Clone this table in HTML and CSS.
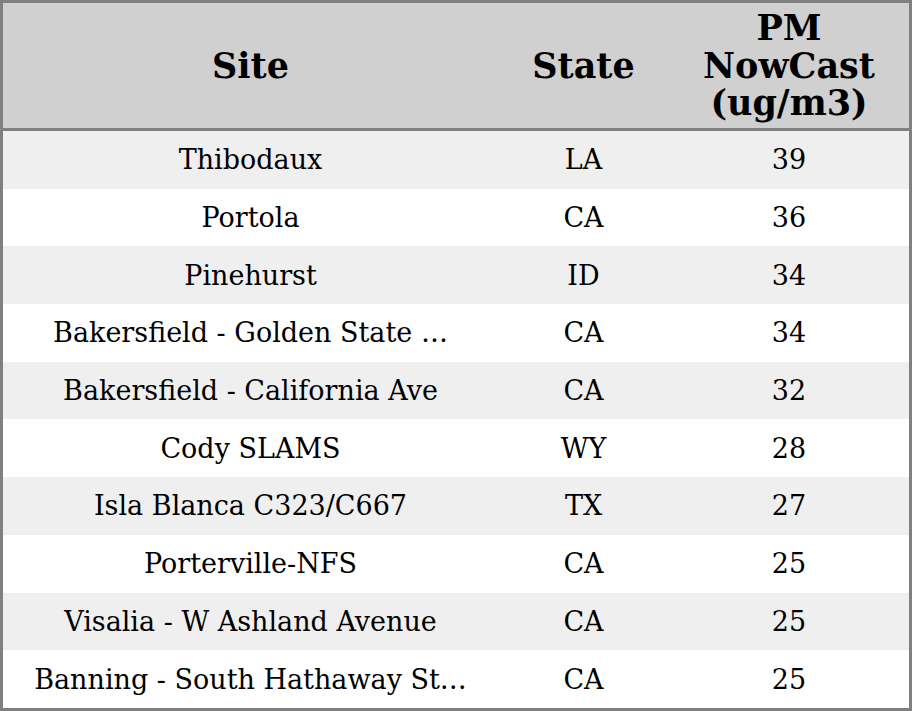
FILE: index.html
```html
<!DOCTYPE html>
<html>
<head>
<meta charset="utf-8">
<link rel="stylesheet" href="styles.css">
</head>
<body>
<table class="grid">
  <colgroup>
    <col class="c-site">
    <col class="c-state">
    <col class="c-pm">
  </colgroup>
  <thead>
    <tr><th>Site</th><th>State</th><th>PM NowCast (ug/m3)</th></tr>
  </thead>
  <tbody>
    <tr><td>Thibodaux</td><td>LA</td><td>39</td></tr>
    <tr><td>Portola</td><td>CA</td><td>36</td></tr>
    <tr><td>Pinehurst</td><td>ID</td><td>34</td></tr>
    <tr><td>Bakersfield - Golden State …</td><td>CA</td><td>34</td></tr>
    <tr><td>Bakersfield - California Ave</td><td>CA</td><td>32</td></tr>
    <tr><td>Cody SLAMS</td><td>WY</td><td>28</td></tr>
    <tr><td>Isla Blanca C323/C667</td><td>TX</td><td>27</td></tr>
    <tr><td>Porterville-NFS</td><td>CA</td><td>25</td></tr>
    <tr><td>Visalia - W Ashland Avenue</td><td>CA</td><td>25</td></tr>
    <tr><td>Banning - South Hathaway St…</td><td>CA</td><td>25</td></tr>
  </tbody>
</table>
</body>
</html>
```
FILE: styles.css
```css
html, body {
  margin: 0;
  padding: 0;
  background: #ffffff;
}
.grid {
  width: 912px;
  height: 711px;
  border-collapse: separate;
  border-spacing: 0;
  table-layout: fixed;
  border: 3px solid #808080;
  font-family: "DejaVu Serif", serif;
  color: #000;
}
.c-site { width: 495px; }
.c-state { width: 171px; }
.c-pm { width: 240px; }
.grid th {
  background: #d0d0d0;
  font-size: 35px;
  font-weight: bold;
  line-height: 37.5px;
  height: 128px;
  padding: 0 12px;
  text-align: center;
  border-bottom: 3px solid #808080;
  box-sizing: border-box;
}
.grid td {
  font-size: 27px;
  text-align: center;
  height: 57.7px;
  padding: 0 4px;
  white-space: nowrap;
  box-sizing: border-box;
}
.grid tbody tr:nth-child(odd) td { background: #efefef; }
.grid tbody tr:nth-child(even) td { background: #ffffff; }
```
